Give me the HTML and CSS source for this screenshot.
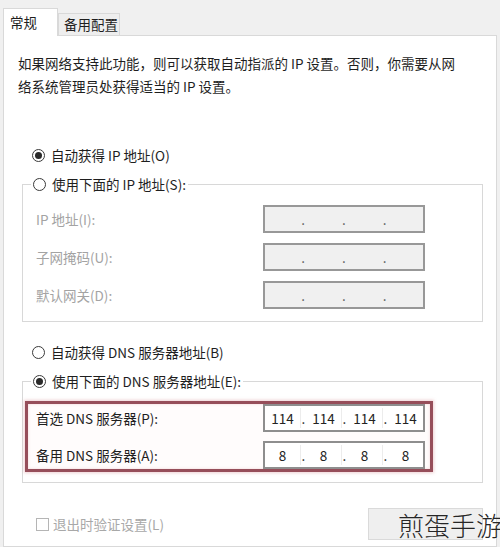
FILE: index.html
```html
<!DOCTYPE html>
<html>
<head>
    <meta charset="utf-8">
    <title>Internet 协议版本 4 (TCP/IPv4) 属性</title>
    <link rel="stylesheet" href="styles.css">
</head>
<body>
    <div class="dialog">
        <div class="tabs">
            <div class="tab active">常规</div>
            <div class="tab">备用配置</div>
        </div>

        <div class="panel">
            <p class="intro">如果网络支持此功能，则可以获取自动指派的 IP 设置。否则，你需要从网<br>络系统管理员处获得适当的 IP 设置。</p>

            <label class="radio first"><span class="dot checked"></span>自动获得 IP 地址(O)</label>

            <div class="group">
                <label class="radio title"><span class="dot"></span>使用下面的 IP 地址(S):</label>
                <div class="rows disabled">
                    <span class="field-label">IP 地址(I):</span>
                    <div class="ip-box"><span></span><i>.</i><span></span><i>.</i><span></span><i>.</i><span></span></div>
                    <span class="field-label">子网掩码(U):</span>
                    <div class="ip-box"><span></span><i>.</i><span></span><i>.</i><span></span><i>.</i><span></span></div>
                    <span class="field-label">默认网关(D):</span>
                    <div class="ip-box"><span></span><i>.</i><span></span><i>.</i><span></span><i>.</i><span></span></div>
                </div>
            </div>

            <label class="radio second"><span class="dot"></span>自动获得 DNS 服务器地址(B)</label>

            <div class="group">
                <label class="radio title"><span class="dot checked"></span>使用下面的 DNS 服务器地址(E):</label>
                <div class="rows dns">
                    <span class="field-label">首选 DNS 服务器(P):</span>
                    <div class="ip-box"><span>114</span><i>.</i><span>114</span><i>.</i><span>114</span><i>.</i><span>114</span></div>
                    <span class="field-label">备用 DNS 服务器(A):</span>
                    <div class="ip-box"><span>8</span><i>.</i><span>8</span><i>.</i><span>8</span><i>.</i><span>8</span></div>
                </div>
            </div>

            <div class="footer">
                <label class="check"><span class="box"></span>退出时验证设置(L)</label>
                <button class="advanced"></button>
            </div>
        </div>

        <div class="watermark">煎蛋手游</div>
    </div>
</body>
</html>
```

FILE: styles.css
```css
body {
    margin: 0;
    background-color: #f0f0f0;
    font-family: "Noto Sans CJK SC", "Noto Sans", sans-serif;
    font-size: 13.5px;
    color: #1e1e1e;
}

.dialog {
    position: relative;
    width: 500px;
    height: 547px;
    display: flex;
    flex-direction: column;
    overflow: hidden;
}

/* tab strip */
.tabs {
    display: flex;
    align-items: flex-end;
    height: 35px;
    padding-left: 3px;
}

.tab {
    box-sizing: border-box;
    height: 22px;
    width: 62px;
    padding-left: 5px;
    line-height: 21px;
    background-color: #eeeeee;
    border: 1px solid #d9d9d9;
    border-bottom: none;
}

.tab.active {
    position: relative;
    z-index: 1;
    width: 55px;
    height: 28px;
    margin-bottom: -1px;
    padding-left: 6px;
    line-height: 27px;
    background-color: #fff;
}

.panel {
    flex: 1;
    margin: 0 3px;
    background-color: #fff;
    border: 1px solid #d9d9d9;
}

.intro {
    margin: 16px 0 0 14px;
    line-height: 23px;
    white-space: nowrap;
}

/* radio buttons */
.radio {
    display: flex;
    align-items: center;
    gap: 6px;
    height: 20px;
    white-space: nowrap;
}

.radio.first {
    margin: 47px 0 0 28px;
}

.radio.second {
    margin: 20px 0 0 28px;
}

.dot {
    box-sizing: border-box;
    width: 13px;
    height: 13px;
    border: 1.3px solid #3a3a3a;
    border-radius: 50%;
    display: flex;
    align-items: center;
    justify-content: center;
    background: #fff;
}

.dot.checked::after {
    content: '';
    width: 7px;
    height: 7px;
    border-radius: 50%;
    background-color: #2a2a2a;
}

/* group boxes */
.group {
    margin: 19px 13px 0 18px;
    padding-bottom: 12px;
    border: 1px solid #d8d8d8;
}

.group .title {
    width: max-content;
    margin: -11px 0 0 8px;
    padding: 0 2px;
    background: #fff;
}

.rows {
    display: grid;
    grid-template-columns: 227px 162px;
    row-gap: 10px;
    align-items: center;
    margin-top: 11px;
    padding-left: 13px;
}

.rows.disabled .field-label {
    color: #a3a3a3;
}

.rows.dns {
    box-sizing: border-box;
    width: 408px;
    margin: 10px 0 -2px 2px;
    padding: 0 5px 0 8px;
    row-gap: 9px;
    border: 3px solid #964e5a;
    background-color: #fffcfc;
    box-shadow: 0 0 3px 1px rgba(210, 120, 130, 0.35), inset 0 0 3px rgba(210, 120, 130, 0.3);
}

.field-label {
    white-space: nowrap;
}

.ip-box {
    box-sizing: border-box;
    height: 28px;
    display: flex;
    align-items: center;
    border: 2px solid #8e8e8e;
    background-color: #fff;
    font-size: 13.5px;
    color: #222;
}

.rows.disabled .ip-box {
    background-color: #f0f0f0;
    border-color: #989898;
}

.ip-box span {
    flex: 1;
    text-align: center;
}

.ip-box i {
    font-style: normal;
    width: 5px;
    text-align: center;
    border-left: 1px solid #ececec;
}

.rows.disabled .ip-box i {
    border-left: none;
    color: #555;
}

/* bottom row */
.footer {
    display: flex;
    align-items: center;
    margin: 25px 13px 0 32px;
}

.check {
    display: flex;
    align-items: center;
    gap: 4px;
    color: #a8a8a8;
}

.check .box {
    box-sizing: border-box;
    width: 13px;
    height: 13px;
    border: 1px solid #b5b5b5;
}

.advanced {
    margin-left: auto;
    width: 115px;
    height: 32px;
    background-color: #efefef;
    border: 1px solid #dadada;
}

.watermark {
    position: absolute;
    left: 398px;
    top: 508px;
    font-size: 26px;
    line-height: 34px;
    font-weight: 300;
    color: #262626;
    white-space: nowrap;
}
```
